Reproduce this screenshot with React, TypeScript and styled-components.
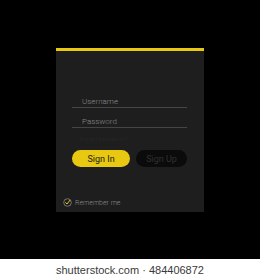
import styled, { createGlobalStyle } from 'styled-components';

const Global = createGlobalStyle`
  html, body {
    margin: 0;
    padding: 0;
    background: #000;
  }
  body {
    width: 260px;
    height: 280px;
    overflow: hidden;
    font-family: Roboto, 'Liberation Sans', sans-serif;
  }
`;

const Page = styled.div`
  display: flex;
  flex-direction: column;
  width: 260px;
  height: 280px;
`;

const Stage = styled.div`
  height: 259px;
  background: #000;
  padding: 48px 0 0 56px;
  box-sizing: border-box;
`;

const Panel = styled.div`
  width: 148px;
  height: 164px;
  box-sizing: border-box;
  background: #1e1e1e;
  border-top: 3px solid #e8c810;
  display: flex;
  flex-direction: column;
  padding: 46px 17px 0 16px;
`;

const Field = styled.div<{ gap?: number }>`
  height: 10px;
  line-height: 10px;
  padding-left: 10px;
  margin-top: ${({ gap }) => gap ?? 0}px;
  border-bottom: 1px solid #454545;
  font-size: 8px;
  font-weight: 300;
  color: #8c8c8c;
`;

const Forgot = styled.div`
  margin: 6px 0 0 8px;
  height: 9px;
  line-height: 9px;
  font-size: 6px;
  color: #262626;
`;

const Buttons = styled.div`
  display: flex;
  gap: 6px;
  margin-top: 7px;
`;

const Button = styled.div<{ primary?: boolean }>`
  width: ${({ primary }) => (primary ? 58 : 51)}px;
  height: 17px;
  border-radius: 9px;
  display: flex;
  align-items: center;
  justify-content: center;
  font-size: 9px;
  background: ${({ primary }) => (primary ? '#e8c810' : '#0b0b0b')};
  color: ${({ primary }) => (primary ? '#1a1a1a' : '#303030')};
`;

const Remember = styled.div`
  display: flex;
  align-items: center;
  gap: 3px;
  margin: 31px 0 0 -9px;
  font-size: 7px;
  font-weight: 300;
  color: #8a8a8a;
`;

const Footer = styled.div`
  flex: 1;
  background: #fff;
  display: flex;
  align-items: center;
  justify-content: center;
  font-family: 'Liberation Sans', Arial, sans-serif;
  font-size: 11px;
  color: #3a3a3a;
`;

const Check = () => (
  <svg width="9" height="9" viewBox="0 0 9 9">
    <circle cx="4.5" cy="4.5" r="3.8" fill="none" stroke="#8a8a8a" strokeWidth="0.8" />
    <path d="M2.6 4.6 L4 6 L6.8 2.4" fill="none" stroke="#e8c810" strokeWidth="1" strokeLinecap="round" />
  </svg>
);

export default function App() {
  return (
    <>
      <Global />
      <Page>
        <Stage>
          <Panel>
            <Field>Username</Field>
            <Field gap={9}>Password</Field>
            <Forgot>Forgot password?</Forgot>
            <Buttons>
              <Button primary>Sign In</Button>
              <Button>Sign Up</Button>
            </Buttons>
            <Remember>
              <Check />
              Remember me
            </Remember>
          </Panel>
        </Stage>
        <Footer>shutterstock.com · 484406872</Footer>
      </Page>
    </>
  );
}
